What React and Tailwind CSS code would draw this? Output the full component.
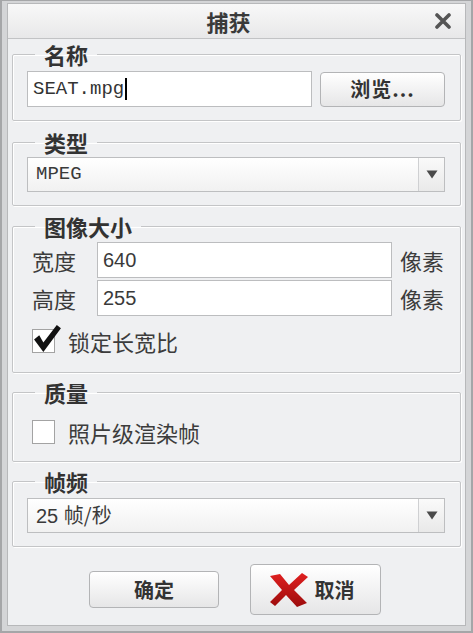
import React from 'react';

const cjk = '"Noto Sans CJK SC", "Noto Sans", sans-serif';

function Group({ title, className, children }) {
    return (
        <fieldset
            className={'mx-[4px] border border-[#c4c5c7] rounded-[2px] pl-[14px] pr-[15px] shadow-[inset_1px_1px_0_#ffffff,1px_1px_0_#ffffff] ' + className}
        >
            <legend className="ml-[8px] px-[9px] text-[22px] leading-[22px] font-bold text-[#333]">{title}</legend>
            {children}
        </fieldset>
    );
}

function SelectBox({ children }) {
    return (
        <div className="flex h-[35px] border border-[#bdbec0] bg-gradient-to-b from-white to-[#f1f1f1]">
            <div className="flex-1 flex items-center pl-[8px] text-[#3a3a3a]">{children}</div>
            <div className="w-[26px] flex items-center justify-center border-l border-[#cfd0d2] bg-gradient-to-b from-[#fafafa] to-[#e9e9e9]">
                <svg width="12" height="9" viewBox="0 0 12 9">
                    <path d="M0.5 0.5 H11.5 L6 8.5 Z" fill="#4a4a4a" />
                </svg>
            </div>
        </div>
    );
}

function CheckBox({ checked }) {
    return (
        <div className="relative w-[23px] h-[24px] border border-[#a3a3a3] bg-white shrink-0">
            {checked && (
                <svg className="absolute -left-[1px] -top-[6px]" width="31" height="31" viewBox="0 0 30 30">
                    <path d="M2 15 L7 11 L11 18 L24 1 L28 4 L11 27 Z" fill="#111" />
                </svg>
            )}
        </div>
    );
}

function SizeRow({ label, value, className }) {
    return (
        <div className={'flex items-center h-[36px] ' + className}>
            <div className="w-[70px] pl-[5px] text-[22px] text-[#3c3c3c]">{label}</div>
            <div className="flex-1 h-full border border-[#bcbdbf] bg-white flex items-center pl-[5px] text-[20px] text-[#3a3a3a]" style={{ fontFamily: '"Liberation Sans", Arial, sans-serif' }}>
                {value}
            </div>
            <div className="ml-[8px] w-[45px] text-[22px] text-[#3c3c3c]">像素</div>
        </div>
    );
}

export default function App() {
    return (
        <div
            className="w-[473px] h-[633px] bg-[#d4d5d7] border-x-2 border-b-2 border-t border-[#a5a6a8] pt-[2px] px-[5px] pb-[5px] flex"
            style={{ fontFamily: cjk }}
        >
            <div className="flex-1 flex flex-col border border-[#b7b8ba] bg-[#eff0f2]">
                {/* Title bar */}
                <div className="h-[35px] shrink-0 flex items-center border-b border-[#c2c3c5] bg-gradient-to-b from-[#f8f8f8] to-[#e8e8e9]">
                    <div className="flex-1 text-center pl-[14px] text-[22px] font-bold text-[#3a3a3a]">捕获</div>
                    <svg className="mr-[14px]" width="16" height="16" viewBox="0 0 16 16">
                        <path d="M2 2 L14 14 M14 2 L2 14" stroke="#555" strokeWidth="3.6" strokeLinecap="round" />
                    </svg>
                </div>

                <Group title="名称" className="mt-[4px] pt-[6px] pb-[13px]">
                    <div className="flex items-center gap-[8px]">
                        <div className="flex-1 h-[36px] border border-[#bcbdbf] bg-white flex items-center pl-[5px] text-[19px] text-[#333]" style={{ fontFamily: '"Liberation Mono", monospace' }}>
                            SEAT.mpg<span className="inline-block w-[2px] h-[22px] bg-black ml-[1px]"></span>
                        </div>
                        <button className="w-[125px] h-[35px] rounded-[4px] border border-[#b3b4b6] bg-gradient-to-b from-white to-[#e6e6e7] text-[20px] font-bold text-[#333] tracking-[1px]">
                            浏览...
                        </button>
                    </div>
                </Group>

                <Group title="类型" className="mt-[10px] pt-[4px] pb-[13px]">
                    <SelectBox>
                        <span className="text-[19px]" style={{ fontFamily: '"Liberation Mono", monospace' }}>MPEG</span>
                    </SelectBox>
                </Group>

                <Group title="图像大小" className="mt-[9px] pt-[5px] pb-[19px]">
                    <SizeRow label="宽度" value="640" />
                    <SizeRow label="高度" value="255" className="mt-[2px] h-[35px]" />
                    <div className="flex items-center mt-[13px] ml-[5px] h-[24px]">
                        <CheckBox checked />
                        <span className="ml-[13px] text-[22px] text-[#3c3c3c]">锁定长宽比</span>
                    </div>
                </Group>

                <Group title="质量" className="mt-[8px] pt-[17px] pb-[17px]">
                    <div className="flex items-center ml-[5px] h-[24px]">
                        <CheckBox />
                        <span className="ml-[13px] text-[22px] text-[#3c3c3c]">照片级渲染帧</span>
                    </div>
                </Group>

                <Group title="帧频" className="mt-[8px] pt-[6px] pb-[13px]">
                    <SelectBox>
                        <span className="text-[20px]">
                            <span style={{ fontFamily: '"Liberation Sans", Arial, sans-serif' }}>25 </span>帧/秒
                        </span>
                    </SelectBox>
                </Group>

                {/* Buttons */}
                <div className="mt-[17px] flex items-center justify-center gap-[31px] pr-[3px]">
                    <button className="w-[130px] h-[37px] rounded-[4px] border border-[#b3b4b6] bg-gradient-to-b from-white to-[#e6e6e7] text-[20px] font-bold text-[#333]">
                        确定
                    </button>
                    <button className="w-[131px] h-[51px] rounded-[4px] border border-[#b3b4b6] bg-gradient-to-b from-white to-[#e6e6e7] flex items-center justify-center gap-[6px] pr-[8px]">
                        <svg width="40" height="34" viewBox="0 0 40 34">
                            <defs>
                                <linearGradient id="xr" x1="0" y1="0" x2="0" y2="1">
                                    <stop offset="0" stopColor="#e02020" />
                                    <stop offset="1" stopColor="#9c0c0c" />
                                </linearGradient>
                            </defs>
                            <path d="M1 3 L11 1 L20 12 L33 0 L39 4 L25 17 L38 30 L28 34 L17 22 L6 33 L1 29 L13 17 Z" fill="url(#xr)" />
                        </svg>
                        <span className="text-[20px] font-bold text-[#333]">取消</span>
                    </button>
                </div>
            </div>
        </div>
    );
}
